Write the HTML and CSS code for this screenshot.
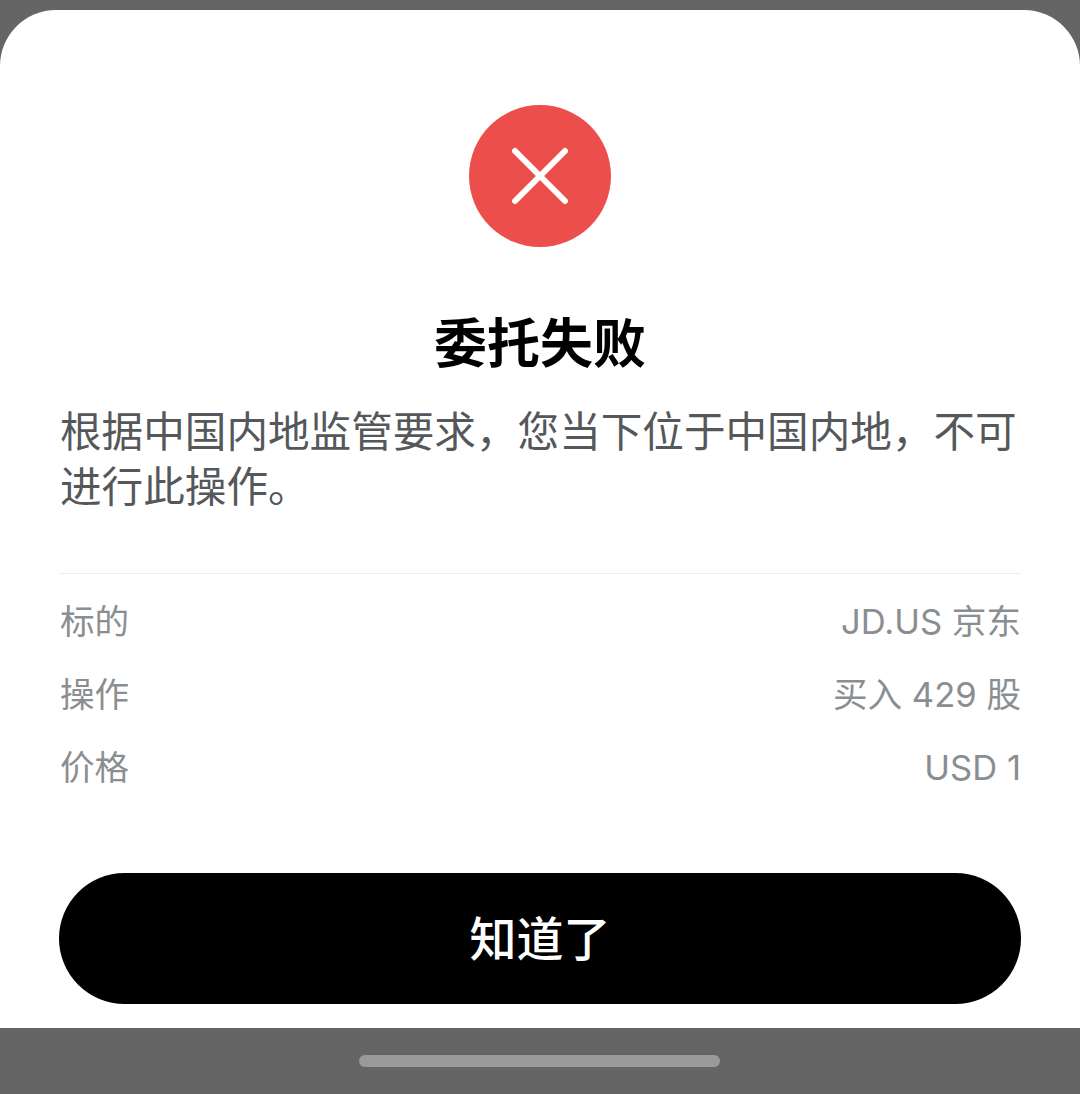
FILE: index.html
```html
<!DOCTYPE html>
<html>
<head>
	<meta charset="UTF-8">
	<title>委托失败</title>
	<link rel="stylesheet" href="styles.css">
</head>
<body>
	<div class="screen">
		<div class="dialog">
			<div class="fail-icon">
				<svg width="142" height="142" viewBox="0 0 142 142">
					<circle cx="71" cy="71" r="71" fill="#ec4f4b"/>
					<path d="M46 46L96 96M96 46L46 96" stroke="#fff" stroke-width="6" stroke-linecap="round" fill="none"/>
				</svg>
			</div>
			<h1 class="fail-title">委托失败</h1>
			<p class="fail-desc">根据中国内地监管要求，您当下位于中国内地，不可进行此操作。</p>
			<div class="order-info">
				<div class="order-row"><span>标的</span><span>JD.US 京东</span></div>
				<div class="order-row"><span>操作</span><span>买入 429 股</span></div>
				<div class="order-row"><span>价格</span><span>USD 1</span></div>
			</div>
			<a href="javascript:;" class="ok-btn">知道了</a>
		</div>
		<div class="nav-bar"><span class="nav-handle"></span></div>
	</div>
</body>
</html>
```

FILE: styles.css
```css
*{
	margin:0;padding:0;box-sizing:border-box;
}
html,body{
	height:100%;
}
body{
	background-color:#656565;
	font-family:"Inter","Noto Sans CJK SC",sans-serif;
}
.screen{
	height:1094px;padding-top:10px;display:flex;flex-direction:column;
}
.dialog{
	height:1018px;background-color:#fff;border-radius:56px 56px 0 0;
	padding:95px 59px 0;
}
.fail-icon{
	display:flex;justify-content:center;height:142px;
}
.fail-title{
	margin-top:64px;height:66px;line-height:66px;text-align:center;
	font-size:53px;font-weight:700;color:#000;
}
.fail-desc{
	margin-top:28px;padding-left:1px;font-size:41.6px;line-height:55px;color:#55585b;
}
.order-info{
	margin-top:58px;padding:11px 0 0 1px;border-top:1px solid #eeeeee;
}
.order-row{
	display:flex;justify-content:space-between;height:73px;line-height:73px;
	font-size:34.6px;color:#8b8e91;
}
.ok-btn{
	display:block;margin-top:69px;height:131px;line-height:131px;border-radius:66px;
	background-color:#000;color:#fff;font-size:47px;font-weight:500;text-align:center;
	text-decoration:none;
}
.nav-bar{
	flex:1;display:flex;justify-content:center;padding:27px 2px 0 0;
}
.nav-handle{
	width:361px;height:12px;border-radius:6px;background-color:#9a9a9a;
}
```
